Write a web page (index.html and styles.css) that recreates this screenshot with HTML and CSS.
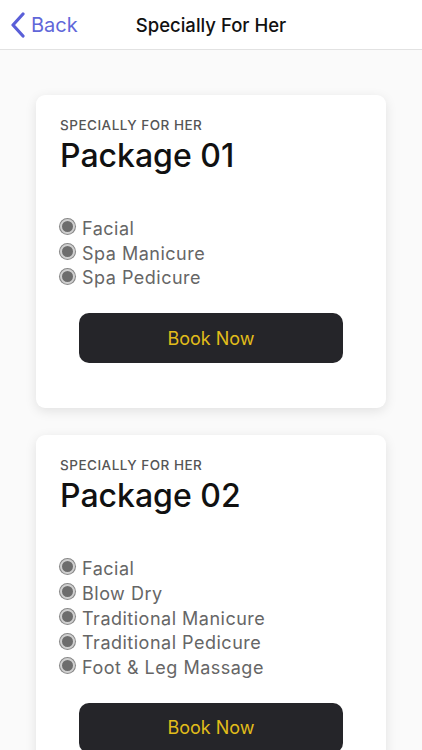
FILE: index.html
```html
<!DOCTYPE html>
<html>
  <head>
    <meta charset="UTF-8" />
    <meta name="viewport" content="width=device-width, initial-scale=1.0" />
    <title>Specially For Her</title>
    <link rel="stylesheet" href="styles.css">
  </head>
  <body>
    <header class="topbar">
      <a class="back" href="#">
        <svg class="back-icon" width="16" height="26" viewBox="0 0 16 26">
          <path d="M13 2 L3 13 L13 24" fill="none" stroke="#5a5fd8" stroke-width="3.2" stroke-linecap="round" stroke-linejoin="round" />
        </svg>
        <span>Back</span>
      </a>
      <h1 class="title">Specially For Her</h1>
    </header>

    <main class="list">
      <section class="card">
        <p class="kicker">SPECIALLY FOR HER</p>
        <h2 class="name">Package 01</h2>
        <ul class="items">
          <li><span class="dot"></span>Facial</li>
          <li><span class="dot"></span>Spa Manicure</li>
          <li><span class="dot"></span>Spa Pedicure</li>
        </ul>
        <button class="book">Book Now</button>
      </section>

      <section class="card">
        <p class="kicker">SPECIALLY FOR HER</p>
        <h2 class="name">Package 02</h2>
        <ul class="items">
          <li><span class="dot"></span>Facial</li>
          <li><span class="dot"></span>Blow Dry</li>
          <li><span class="dot"></span>Traditional Manicure</li>
          <li><span class="dot"></span>Traditional Pedicure</li>
          <li><span class="dot"></span>Foot &amp; Leg Massage</li>
        </ul>
        <button class="book">Book Now</button>
      </section>
    </main>
  </body>
</html>
```

FILE: styles.css
```css
* {
  margin: 0;
  padding: 0;
  box-sizing: border-box;
  font-family: Inter, "Open Sans", sans-serif;
}

body {
  background: #fafafa;
  overflow: hidden;
}

.topbar {
  position: relative;
  height: 50px;
  background: #fff;
  border-bottom: 1px solid #e2e2e2;
  display: flex;
  align-items: center;
  justify-content: center;
}

.back {
  position: absolute;
  left: 10px;
  top: 12px;
  display: flex;
  align-items: center;
  gap: 5px;
  color: #6167d9;
  text-decoration: none;
  font-size: 20px;
}

.back-icon {
  display: block;
}

.title {
  font-size: 18.5px;
  font-weight: 500;
  color: #111;
}

.list {
  padding: 45px 36px 0;
  display: flex;
  flex-direction: column;
  gap: 27px;
}

.card {
  background: #fff;
  border-radius: 9px;
  box-shadow: 0 3px 12px rgba(0, 0, 0, 0.1);
  padding: 22px 24px 45px;
}

.kicker {
  font-size: 13.5px;
  font-weight: 500;
  color: #555;
  letter-spacing: 0.5px;
  line-height: 17px;
}

.name {
  font-size: 32px;
  font-weight: 500;
  color: #111;
  line-height: 40px;
  margin-top: 2px;
}

.items {
  list-style: none;
  margin-top: 41px;
}

.items li {
  display: flex;
  align-items: center;
  gap: 7px;
  font-size: 18px;
  letter-spacing: 0.5px;
  line-height: 24.7px;
  color: #666;
}

.dot {
  width: 15px;
  height: 15px;
  border-radius: 50%;
  background: #6d6d6d;
  border: 2px solid #d0d0d0;
  box-shadow: 0 0 0 1px #888;
  margin-top: -5px;
  flex: none;
}

.book {
  display: block;
  width: 264px;
  height: 50px;
  margin: 22px auto 0;
  border: none;
  border-radius: 10px;
  background: #252529;
  color: #e2bd1a;
  font-size: 18px;
  cursor: pointer;
}
```
